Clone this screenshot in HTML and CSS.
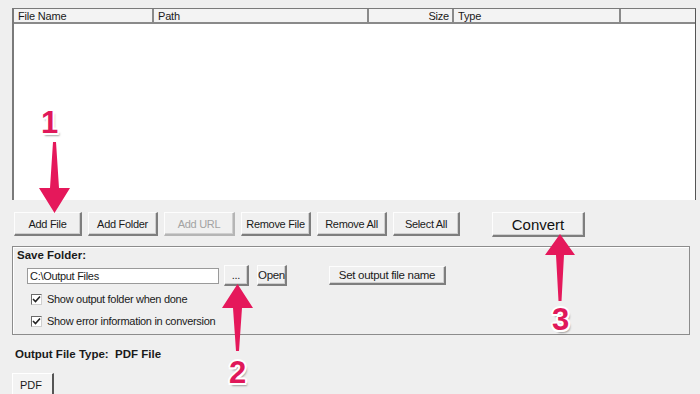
FILE: index.html
```html
<!DOCTYPE html>
<html>
<head>
<meta charset="utf-8">
<link rel="stylesheet" href="styles.css">
</head>
<body>
<div class="app">
  <div class="list">
    <div class="list-head">
      <div class="col c-name">File Name</div>
      <div class="col c-path">Path</div>
      <div class="col c-size">Size</div>
      <div class="col c-type">Type</div>
      <div class="col c-rest"></div>
    </div>
    <div class="list-body"></div>
  </div>

  <div class="toolbar">
    <button class="btn w68">Add File</button>
    <button class="btn w70">Add Folder</button>
    <button class="btn w71 disabled">Add URL</button>
    <button class="btn w70">Remove File</button>
    <button class="btn w70">Remove All</button>
    <button class="btn w67">Select All</button>
    <button class="btn convert">Convert</button>
  </div>

  <div class="group">
    <div class="group-title">Save Folder:</div>
    <div class="path-row">
      <div class="textbox">C:\Output Files</div>
      <button class="btn small dots">...</button>
      <button class="btn small open">Open</button>
      <button class="btn small setname">Set output file name</button>
    </div>
    <label class="check"><span class="box"><svg width="9" height="9" viewBox="0 0 9 9"><path d="M1 4 L3.5 6.5 L8 1.5" fill="none" stroke="#222" stroke-width="1.6"/></svg></span>Show output folder when done</label>
    <label class="check"><span class="box"><svg width="9" height="9" viewBox="0 0 9 9"><path d="M1 4 L3.5 6.5 L8 1.5" fill="none" stroke="#222" stroke-width="1.6"/></svg></span>Show error information in conversion</label>
  </div>

  <div class="out-type">Output File Type:&nbsp; PDF File</div>

  <div class="tabs">
    <div class="tab">PDF</div>
  </div>
</div>

<svg class="arrow a1" width="34" height="72" viewBox="0 0 34 72"><polygon points="15,0 18,0 21,46 32,46 16.5,71 1,46 12,46" fill="#e5185b"/></svg>
<svg class="arrow a2" width="32" height="68" viewBox="0 0 32 68"><polygon points="15.5,0 31,24 20,24 17,67 14,67 11,24 0,24" fill="#e5185b"/></svg>
<svg class="arrow a3" width="32" height="68" viewBox="0 0 32 68"><polygon points="16,0 31,21 20,21 17.5,67 14.5,67 12,21 1,21" fill="#e5185b"/></svg>

<div class="num n1">1</div>
<div class="num n2">2</div>
<div class="num n3">3</div>
</body>
</html>
```

FILE: styles.css
```css
* { box-sizing: border-box; }
html, body { margin: 0; padding: 0; }
body {
  width: 700px;
  height: 394px;
  overflow: hidden;
  background: #efefef;
  font-family: "Liberation Sans", Arial, sans-serif;
  font-size: 11px;
  color: #1a1a1a;
  position: relative;
}
.app {
  padding: 8px 5px 0 12px;
  display: flex;
  flex-direction: column;
}
.list {
  width: 684px;
  height: 192px;
  border-left: 2px solid #7a7a7a;
  border-top: 1px solid #7a7a7a;
  border-right: 1px solid #555;
  background: #fff;
  display: flex;
  flex-direction: column;
}
.list-head {
  display: flex;
  height: 15px;
  background: #f3f3f3;
  border-bottom: 2px solid #8a8a8a;
}
.col {
  border-right: 2px solid #8a8a8a;
  padding: 1px 4px 0;
  line-height: 12px;
  white-space: nowrap;
  letter-spacing: -0.2px;
}
.c-name { width: 140px; }
.c-path { width: 215px; }
.c-size { width: 85px; text-align: right; padding-right: 3px; }
.c-type { width: 167px; }
.c-rest { flex: 1; border-right: none; }
.list-body { flex: 1; }

.toolbar {
  display: flex;
  align-items: flex-start;
  gap: 6px;
  margin-top: 12px;
  padding-left: 2px;
}
.btn {
  font-family: "Liberation Sans", Arial, sans-serif;
  font-size: 11px;
  letter-spacing: -0.3px;
  color: #1a1a1a;
  background: #f0f0f0;
  height: 24px;
  padding: 0;
  border-top: 1px solid #fdfdfd;
  border-left: 1px solid #fdfdfd;
  border-right: 2px solid #7e7e7e;
  border-bottom: 2px solid #7e7e7e;
  box-shadow: inset -1px -1px 0 #cfcfcf;
}
.w68 { width: 68px; }
.w70 { width: 70px; }
.w71 { width: 71px; }
.w67 { width: 67px; }
.disabled { color: #a3a3a3; border-right-color: #b5b5b5; border-bottom-color: #b5b5b5; }
.convert {
  width: 93px;
  height: 25px;
  margin-left: 26px;
  font-size: 15px;
  letter-spacing: 0;
  color: #111;
}

.group {
  margin-top: 9px;
  width: 678px;
  height: 89px;
  border: 1px solid #8c8c8c;
  box-shadow: inset 1px 1px 0 #fff;
  padding: 2px 0 0 4px;
  display: flex;
  flex-direction: column;
}
.group-title {
  font-weight: bold;
  font-size: 11.5px;
  line-height: 13px;
}
.path-row {
  display: flex;
  align-items: center;
  margin-top: 3px;
  padding-left: 10px;
  height: 21px;
}
.textbox {
  width: 192px;
  height: 16px;
  background: #fff;
  border: 1px solid #9a9a9a;
  padding: 0 2px;
  line-height: 14px;
  letter-spacing: -0.3px;
}
.btn.small { height: 21px; }
.dots { width: 25px; margin-left: 5px; }
.open { width: 30px; margin-left: 8px; font-size: 11.5px; }
.setname { width: 117px; height: 19px !important; margin-left: 42px; font-size: 11.5px; }
.check {
  display: flex;
  align-items: center;
  height: 14px;
  margin-left: 14px;
  font-size: 11px;
  letter-spacing: -0.3px;
}
.check:first-of-type { margin-top: 6px; }
.check + .check { margin-top: 8px; }
.box {
  width: 11px;
  height: 11px;
  border: 1px solid #6a6a6a;
  border-right-color: #cfcfcf;
  border-bottom-color: #cfcfcf;
  background: #fff;
  margin-right: 5px;
  display: flex;
  align-items: center;
  justify-content: center;
}
.out-type {
  margin-top: 13px;
  padding-left: 3px;
  font-weight: bold;
  font-size: 11.5px;
  line-height: 13px;
}
.tabs {
  margin-top: 12px;
  height: 22px;
  display: flex;
}
.tab {
  width: 42px;
  height: 22px;
  padding: 5px 0 0 7px;
  border-top: 1px solid #fff;
  border-left: 1px solid #fff;
  border-right: 2px solid #555;
  background: #f3f3f3;
  font-size: 11px;
}

.arrow { position: absolute; }
.a1 { left: 38px; top: 142px; }
.a2 { left: 222px; top: 284px; }
.a3 { left: 544px; top: 234px; }
.num {
  position: absolute;
  font-family: "Liberation Sans", Arial, sans-serif;
  font-weight: bold;
  font-size: 31px;
  line-height: 1;
  color: #e0185a;
  text-shadow:
    -2px 0 0 #fff, 2px 0 0 #fff, 0 -2px 0 #fff, 0 2px 0 #fff,
    -1.5px -1.5px 0 #fff, 1.5px 1.5px 0 #fff, -1.5px 1.5px 0 #fff, 1.5px -1.5px 0 #fff,
    2px 3px 2px rgba(0,0,0,0.35);
}
.n1 { left: 41px; top: 107px; }
.n2 { left: 229px; top: 357px; }
.n3 { left: 552px; top: 304px; }
```
